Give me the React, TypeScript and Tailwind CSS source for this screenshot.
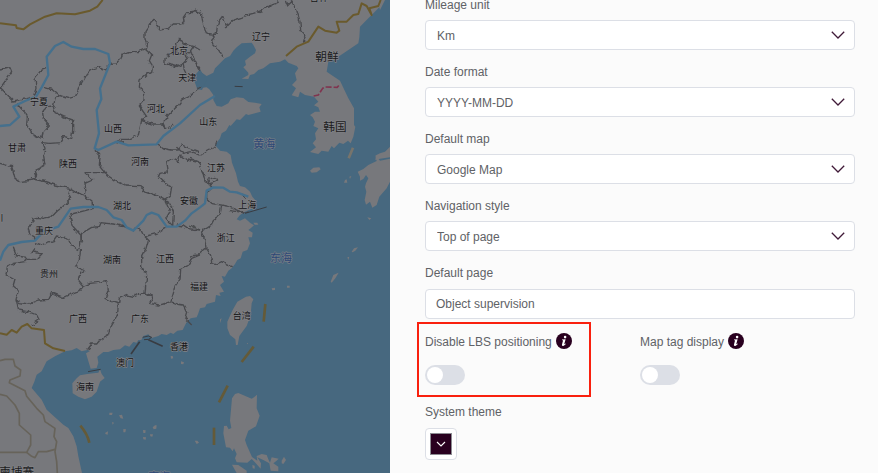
import { useState } from "react";
import React from "react";

type MapLabel = {
    text: string;
    x: number;
    y: number;
    kind?: "country" | "sea";
};

type SelectFieldProps = {
    id: string;
    label: string;
    options: string[];
};

type SwitchFieldProps = {
    id: string;
    label: string;
    marked?: boolean;
};

// map units are thirds of a pixel
const SEA =
    "M1155 0 L1140 30 1138 22 1115 45 1105 55 1080 80 1078 112 1075 130 1015 170 985 185 980 215 1020 242 1045 295 1062 325 1062 375 1066 380 1060 410 1052 430 1044 422 1030 432 1018 428 1002 445 995 438 985 455 965 452 955 462 945 460 930 456 948 442 938 430 948 418 945 400 955 385 940 378 945 365 938 352 930 345 945 335 960 335 955 322 942 316 955 305 942 290 915 285 900 275 895 292 875 286 888 265 876 255 890 240 885 220 895 205 890 198 865 188 855 178 840 185 810 190 790 205 775 210 762 222 750 225 745 237 725 236 745 225 745 218 730 202 738 195 735 182 750 170 765 160 768 150 760 135 755 128 725 130 710 142 700 152 690 168 675 175 655 195 645 205 640 218 620 228 608 220 598 215 592 228 585 232 585 245 595 265 620 262 628 268 640 285 640 300 650 318 665 320 685 310 692 298 710 292 730 294 745 306 765 308 785 312 778 322 782 335 745 345 738 342 720 360 710 358 692 378 688 375 678 392 665 400 660 415 645 435 660 452 680 455 692 465 696 488 708 520 714 545 720 558 735 562 750 575 757 590 768 603 768 615 758 625 735 635 720 645 710 658 720 662 735 655 750 668 762 676 752 685 745 690 758 698 756 712 745 712 750 730 742 750 728 755 722 775 712 780 705 792 695 805 685 812 675 830 665 828 672 845 660 855 672 875 658 878 662 888 648 885 645 905 620 912 615 922 600 925 595 940 590 952 572 955 558 970 548 990 532 992 520 1002 512 998 500 1005 485 1002 475 1008 455 1014 445 1003 430 1008 424 1020 415 1020 410 1028 400 1026 388 1040 375 1036 360 1048 340 1050 325 1056 310 1056 292 1070 295 1088 290 1104 272 1106 264 1080 258 1060 270 1053 262 1050 245 1054 230 1044 215 1051 195 1054 165 1069 140 1084 125 1114 110 1124 103 1145 95 1164 125 1199 140 1229 190 1274 205 1284 220 1309 230 1339 235 1369 246 1419 1170 1419 1170 0 Z";

const BOHAI_BAY = "M600 208 L588 222 584 245 592 268 606 270 620 240 Z";

const ISLANDS = [
    // hainan, taiwan
    "M240 1126 L262 1122 280 1120 295 1118 300 1108 305 1122 314 1134 300 1145 290 1175 275 1190 255 1198 235 1190 218 1180 217 1150 230 1135 Z",
    "M738 890 L750 888 760 898 755 910 752 945 740 978 718 1008 713 1035 708 1035 706 1018 690 1005 682 985 682 965 698 930 712 905 Z",
    // kyushu
    "M1126 465 L1130 483 1105 495 1090 507 1073 515 1080 530 1080 542 1090 537 1098 525 1105 535 1098 550 1095 560 1099 575 1094 600 1098 614 1110 605 1117 623 1130 615 1138 590 1160 565 1170 545 1170 476 1140 482 1130 470 Z",
    "M1126 480 L1128 466 1140 460 1155 455 1170 440 1170 472 1140 476 Z",
    // luzon
    "M705 1182 L715 1179 755 1196 762 1192 771 1184 770 1225 779 1247 768 1279 745 1292 735 1320 740 1335 756 1371 772 1382 770 1368 785 1362 800 1365 805 1378 810 1388 815 1372 836 1376 828 1384 820 1390 835 1400 835 1414 812 1412 808 1390 790 1380 772 1372 783 1390 782 1406 762 1384 755 1377 742 1388 710 1387 705 1375 710 1362 702 1345 698 1354 690 1343 678 1342 670 1300 672 1278 680 1277 686 1288 694 1284 690 1262 696 1195 Z",
    "M696 1394 L715 1395 740 1412 740 1419 710 1419 Z",
    "M845 1382 L852 1370 858 1380 850 1392 845 1390 Z",
    "M757 1395 L764 1397 764 1406 758 1405 Z",
    // small ones
    "M930 512 L940 503 958 502 962 508 950 517 935 518 Z",
    "M1035 540 L1040 538 1042 548 1032 548 Z M1048 530 L1054 528 1050 537 Z",
    "M1102 652 L1114 655 1108 660 Z",
    "M1055 755 L1062 745 1074 742 1066 752 1058 757 Z M1042 772 L1048 770 1045 780 Z",
    "M992 845 L1000 825 1012 820 1016 818 1006 835 995 848 Z",
    "M760 668 L772 668 775 674 764 674 Z",
    "M815 865 L825 863 825 870 817 871 Z M861 857 L869 857 869 863 861 863 Z",
    "M660 958 L665 955 660 970 Z M740 1029 L744 1029 743 1033 Z",
    "M512 1068 L518 1068 520 1075 513 1076 Z M543 1084 L552 1087 550 1093 543 1092 Z",
    "M328 1238 L338 1238 336 1245 328 1245 Z M357 1246 L366 1244 370 1256 362 1255 Z",
    "M336 1266 L342 1268 338 1274 Z M316 1298 L324 1294 323 1304 316 1302 Z",
    "M370 1287 L378 1288 376 1297 370 1297 Z M429 1290 L437 1291 436 1299 430 1299 Z",
    "M458 1282 L465 1276 470 1276 469 1286 461 1288 Z M450 1303 L459 1303 457 1310 451 1309 Z",
    "M429 1311 L438 1312 437 1319 430 1318 Z M584 1322 L592 1322 597 1328 590 1332 Z",
];

const BORDERS = [
    "M600 38 L585 30 575 38 560 38 550 52 552 65 540 72 520 72 505 85 480 90 470 78 472 60 458 58 448 75 435 95 435 120 442 138 438 150 455 165 448 182 458 198 455 218 440 222 420 240 418 262 430 272 432 300 418 318 440 350 425 360 420 385 415 405 385 418 360 418 350 430",
    "M440 145 L415 155 385 155 368 162 358 182 350 192 330 193 318 210 298 200 275 208 258 225 250 240 235 265 228 290 205 295 175 285 155 268 132 262",
    "M0 210 L30 203 35 215 18 240 0 265 20 285 38 303 75 297 100 290",
    "M138 206 L122 212 105 235 108 265 100 290",
    "M50 310 L72 335 82 350 80 375 95 400 125 415 130 395 148 375 130 355 128 335 140 320 160 318 165 295 178 285",
    "M160 320 L165 338 190 350 218 360 218 390 215 415 190 410 180 428 150 430 128 428 135 445 130 465 135 495 130 498 105 510 110 525 100 540 60 545 45 535 40 515 35 500 0 490",
    "M425 362 L460 372 492 372 495 388 520 375",
    "M495 388 L488 368 505 345 530 320 545 300 570 285 600 262",
    "M500 165 L530 155 527 130 540 118 550 132 580 140 570 155 555 165 565 175 550 190 530 200 510 195 495 190 495 175 510 168",
    "M550 192 L553 210 560 225 M580 138 L600 150 M570 170 L585 185 600 205",
    "M600 38 L605 45 608 65 615 90 620 100 648 103 655 65 668 48 680 80 700 60 725 52 740 45 760 40 790 30 805 18 830 10 835 0",
    "M570 35 L590 32 600 38",
    "M645 102 L635 125 650 140 660 155 672 175 M855 0 L862 18 875 5 890 30 900 65 902 90 915 110 910 128",
    "M570 160 L585 175 590 195 600 212",
    "M285 450 L300 470 298 495 318 520 325 528 350 545 378 558 420 560 440 575 460 582 490 598 510 612 520 635 518 678",
    "M318 518 L255 518 278 540 255 550 258 575 255 588 280 610 280 625 255 632 215 642 210 655 218 678 242 705 245 725",
    "M90 535 L130 543 165 555 210 565 235 580 265 590 M210 565 L205 585 212 595 195 615 175 630 155 650 130 655 110 652 95 655 100 665 85 685 90 702 105 712 100 725",
    "M105 728 L125 735 140 728 160 722 170 708 205 718 215 738 235 752 242 730 245 700 275 682 295 680 300 668 340 672 370 680 395 690 420 685 430 705 445 720 438 745 425 770 425 800 440 825 435 880",
    "M242 750 L238 780 228 800 255 812 238 825 235 840 250 858 240 872 205 885 190 892 155 878 145 898 115 900 85 912 60 908 48 900 55 870 40 858 45 840 18 825 22 800 40 790 75 785 80 772 50 768 40 740",
    "M98 755 L125 762 110 778 80 778 M105 745 L95 760",
    "M248 860 L270 850 290 848 320 842 325 870 315 895 335 905 355 912 358 895 380 885 400 890 420 880 435 880 460 888 448 910 475 915 490 912 512 905 520 880 525 858 540 838 542 808 560 800 575 775 600 765",
    "M355 915 L352 945 330 982 325 1005 300 1020 290 1032 275 1032 262 1050",
    "M512 905 L530 912 550 915 560 935 555 955 575 975",
    "M50 900 L55 930 85 935 110 945 118 960 95 975",
    "M435 710 L470 700 498 682",
    "M530 675 L550 678 560 685 600 690",
    "M520 680 L498 655 510 635 495 600 510 590 515 560 495 550 475 530 480 520 505 515 500 485 515 475 535 485 540 465 560 480 600 488",
    "M350 428 L375 425 M470 432 L490 445 515 450 535 450 545 435 570 445 595 455 M530 442 L550 460 575 455 600 465 625 450 645 440 650 425",
    "M570 475 L595 485 600 500 610 520 615 545 630 552 650 540 645 532 625 538 635 565 620 580 620 595 635 610 680 618 705 628 735 640",
    "M665 618 L660 645 645 655 635 675 605 695 615 720 618 745 595 765 570 768 M570 675 L600 690",
    "M618 748 L632 765 635 788 650 792 665 785 680 795 698 800",
    "M725 582 L740 595 M690 632 L745 640",
];

const RIVERS = [
    "M0 378 L30 375 58 350 40 320 75 303 108 290 125 262 145 225 140 170 165 138 190 126 215 140 250 147 285 147 325 162 330 190 300 265 304 297 290 330 297 400 284 445 295 450 350 425 385 436 470 433 490 408 540 370 600 315 645 288",
    "M0 782 L10 755 25 735 65 726 105 722 130 695 175 680 212 626 250 621 295 621 320 630 340 652 365 660 380 682 400 692 430 662 440 645 455 638 475 645 500 680 530 680 555 662 575 640 600 622 615 610 620 572 640 562 670 563 690 575 710 577 745 590",
];

const ROADS = [
    "M0 70 L48 76 50 84 70 88 90 73 135 50 170 40 225 43 270 32 292 20 308 0",
    "M858 168 L890 140 925 125 955 80 975 92 1010 98 1018 92 1010 65 1040 65 1060 45 1075 42 1085 10 1100 18 1115 45 1108 25 1135 18 1142 0",
    "M0 1000 L20 1004 35 990 50 998 65 980 82 972 95 985 132 990 135 1030 160 1045 195 1053",
];

const TRAILS = [
    "M0 1082 L15 1078 40 1078 45 1098 62 1110 60 1128 30 1140 28 1148 75 1172 80 1189 110 1225 130 1245 135 1265 165 1285 162 1310 170 1325 165 1355 170 1385 172 1419",
    "M0 1183 L20 1188 45 1215 58 1240 58 1275 92 1305 92 1335 80 1357 0 1357",
    "M80 1357 L95 1369 105 1373 115 1355 140 1355 165 1348",
];

const DASHES = [
    "M796 912 L791 965",
    "M761 1040 L725 1086",
    "M683 1157 L657 1207",
    "M642 1283 L642 1335",
    "M241 1277 C254 1292 264 1310 268 1328",
];

const LABELS: MapLabel[] = [
    { text: "北京", x: 537, y: 151 },
    { text: "天津", x: 562, y: 233 },
    { text: "宁夏", x: 117, y: 303 },
    { text: "河北", x: 467, y: 325 },
    { text: "山西", x: 339, y: 385 },
    { text: "甘肃", x: 51, y: 442 },
    { text: "辽宁", x: 783, y: 110 },
    { text: "吉林", x: 956, y: -7 },
    { text: "朝鲜", x: 981, y: 165, kind: "country" },
    { text: "韩国", x: 1005, y: 377, kind: "country" },
    { text: "黄海", x: 793, y: 428, kind: "sea" },
    { text: "东海", x: 843, y: 770, kind: "sea" },
    { text: "南海", x: 478, y: 1429, kind: "sea" },
    { text: "山东", x: 625, y: 365 },
    { text: "陕西", x: 204, y: 490 },
    { text: "河南", x: 420, y: 484 },
    { text: "湖北", x: 366, y: 616 },
    { text: "安徽", x: 567, y: 601 },
    { text: "四川", x: -17, y: 652 },
    { text: "重庆", x: 132, y: 691 },
    { text: "贵州", x: 147, y: 820 },
    { text: "湖南", x: 336, y: 778 },
    { text: "江西", x: 495, y: 775 },
    { text: "江苏", x: 648, y: 503 },
    { text: "上海", x: 742, y: 614 },
    { text: "浙江", x: 677, y: 713 },
    { text: "福建", x: 597, y: 858 },
    { text: "台湾", x: 725, y: 947 },
    { text: "广西", x: 234, y: 955 },
    { text: "广东", x: 420, y: 955 },
    { text: "香港", x: 537, y: 1040 },
    { text: "澳门", x: 375, y: 1087 },
    { text: "海南", x: 255, y: 1159 },
    { text: "柬埔寨", x: 50, y: 1411, kind: "country" },
];

function labelClass(kind?: string) {
    if (kind === "country") return "text-[35px] fill-[#1c1c1e] stroke-[#818286]";
    if (kind === "sea") return "text-[33px] fill-[#2c4877] stroke-[#757c85]";
    return "text-[27px] fill-[#151517] stroke-[#818286]";
}

function MapView() {
    return (
        <svg
            className="block w-full h-full font-['Noto_Sans_CJK_SC',sans-serif]"
            viewBox="0 0 1170 1419"
            preserveAspectRatio="xMinYMin slice"
            fill="none"
            strokeLinejoin="round"
            role="img"
            aria-label="Map"
        >
            <defs>
                <filter id="rough" filterUnits="userSpaceOnUse" x="0" y="0" width="1170" height="1419">
                    <feTurbulence type="fractalNoise" baseFrequency="0.06" numOctaves="2" seed="4" />
                    <feDisplacementMap in="SourceGraphic" scale="14" xChannelSelector="R" yChannelSelector="G" />
                </filter>
            </defs>
            <rect width="1170" height="1419" fill="#77787c" />
            <path d={SEA} fill="#47687f" />
            <path d={BOHAI_BAY} fill="#47687f" />
            {ISLANDS.map((d, i) => <path key={i} d={d} fill="#77787c" />)}
            <g stroke="#48494d" strokeWidth="4" filter="url(#rough)">
                {BORDERS.map((d, i) => <path key={i} d={d} />)}
            </g>
            <g stroke="#45708d" strokeWidth="7">
                {RIVERS.map((d, i) => <path key={i} d={d} />)}
            </g>
            <g stroke="#67635a" strokeWidth="5">
                {TRAILS.map((d, i) => <path key={i} d={d} />)}
            </g>
            <g stroke="#6a5a2d" strokeWidth="6">
                {ROADS.map((d, i) => <path key={i} d={d} />)}
            </g>
            <g stroke="#645a38" strokeWidth="8">
                {DASHES.map((d, i) => <path key={i} d={d} />)}
            </g>
            <path d="M1059 443 L1046 475" stroke="#77746c" strokeWidth="8" />
            <path d="M941 288 L955 285 968 265 975 261 1012 262 1020 252" stroke="#80344f" strokeWidth="5" strokeDasharray="18 6" />
            <g stroke="#393c42" strokeWidth="5">
                <path d="M419 1025 L393 1062" />
                <path d="M445 1019 L488 1039" />
                <path d="M264 1115 L302 1108" strokeWidth="3" />
                <path d="M704 259 L728 260" strokeWidth="3" />
                <path d="M735 640 L800 621" strokeWidth="3" />
                <path d="M428 1012 L445 1008 455 1012 446 1018 432 1019" strokeWidth="3" />
            </g>
            {LABELS.map((label) => (
                <text
                    key={label.text}
                    x={label.x}
                    y={label.y}
                    textAnchor="middle"
                    dominantBaseline="central"
                    strokeWidth="4"
                    paintOrder="stroke"
                    className={labelClass(label.kind)}
                >
                    {label.text}
                </text>
            ))}
        </svg>
    );
}

function SelectField({ id, label, options }: SelectFieldProps) {
    return (
        <div className="flex flex-col gap-[10px]">
            <label htmlFor={id} className="leading-[10px]">{label}</label>
            <div className="relative">
                <select id={id} className="block w-full h-[30px] appearance-none rounded-[4px] border border-[#dcdfe6] bg-white pt-px pl-[11px] pr-10 outline-none">
                    {options.map((option) => <option key={option}>{option}</option>)}
                </select>
                <svg viewBox="0 0 14 8" fill="none" stroke="#401a38" strokeWidth={1.3} className="pointer-events-none absolute right-[10px] top-[11px] w-[14px] h-[8px]">
                    <path d="M0.8 0.8 7 7 13.2 0.8" />
                </svg>
            </div>
        </div>
    );
}

function InfoIcon() {
    return (
        <svg viewBox="0 0 16 16" className="w-4 h-4" aria-hidden="true">
            <circle cx="8" cy="8" r="8" fill="#29001f" />
            <circle cx="9.1" cy="4.1" r="1.3" fill="#fff" />
            <path d="M6 6.6 9.6 6.2 8.2 11.3 9.6 10.6 9.8 11.1C8.8 12.4 7.8 13 6.9 12.9 6 12.8 5.8 12.2 6 11.4L7.1 7.3 6 7.2Z" fill="#fff" />
        </svg>
    );
}

function SwitchField({ id, label, marked }: SwitchFieldProps) {
    const [checked, setChecked] = useState<boolean>(false);
    return (
        <div className="relative flex flex-col gap-4">
            <div className="flex items-end gap-1 h-4">
                <label htmlFor={id} className="leading-[14px]">{label}</label>
                <button type="button" aria-label={`About ${label}`} className="cursor-pointer">
                    <InfoIcon />
                </button>
            </div>
            <input
                id={id}
                type="checkbox"
                role="switch"
                checked={checked}
                onChange={() => setChecked(!checked)}
                className="appearance-none flex items-center w-10 h-5 rounded-full bg-[#dcdfe6] px-[2px] cursor-pointer before:block before:w-4 before:h-4 before:rounded-full before:bg-white checked:bg-[#29001f] checked:justify-end"
            />
            {marked && <div className="pointer-events-none absolute -left-2 -top-[11px] w-[174px] h-[75px] border-2 border-[#f9200e]" />}
        </div>
    );
}

export default function App() {
    return (
        <div className="flex h-screen overflow-hidden bg-[#fbfbfb] font-['Liberation_Sans',Arial,sans-serif] text-[12px] text-[#606266]">
            <div className="flex-1 min-w-0 bg-[#77787c]">
                <MapView />
            </div>
            <form className="flex flex-col w-[488px] shrink-0 pl-[35px] pr-[23px]">
                <div className="flex flex-col gap-[17px]">
                    <SelectField id="mileage" label="Mileage unit" options={["Km", "Mile"]} />
                    <SelectField id="date" label="Date format" options={["YYYY-MM-DD", "DD-MM-YYYY"]} />
                    <SelectField id="map" label="Default map" options={["Google Map", "OpenStreetMap"]} />
                    <SelectField id="nav" label="Navigation style" options={["Top of page", "Left of page"]} />
                    <div className="flex flex-col gap-[11px]">
                        <label htmlFor="page" className="leading-[10px]">Default page</label>
                        <input id="page" type="text" defaultValue="Object supervision" className="w-full h-[30px] rounded-[4px] border border-[#dcdfe6] bg-white px-[10px] outline-none" />
                    </div>
                </div>
                <div className="grid grid-cols-2 pt-[14px]">
                    <SwitchField id="lbs" label="Disable LBS positioning" marked />
                    <SwitchField id="tags" label="Map tag display" />
                </div>
                <div className="flex flex-col items-start gap-[11px] pt-[22px]">
                    <p id="theme" className="leading-[10px]">System theme</p>
                    <button type="button" aria-labelledby="theme" className="flex items-center justify-center w-8 h-8 rounded-[4px] border border-[#dcdfe6] bg-white cursor-pointer">
                        <span className="flex items-center justify-center w-[22px] h-[22px] border border-[#8c8c92] bg-[#29001f]">
                            <svg viewBox="0 0 10 6" fill="none" stroke="#fff" strokeWidth={1.1} className="w-[10px] h-[6px]">
                                <path d="M1 1 5 5 9 1" />
                            </svg>
                        </span>
                    </button>
                </div>
            </form>
        </div>
    );
}
